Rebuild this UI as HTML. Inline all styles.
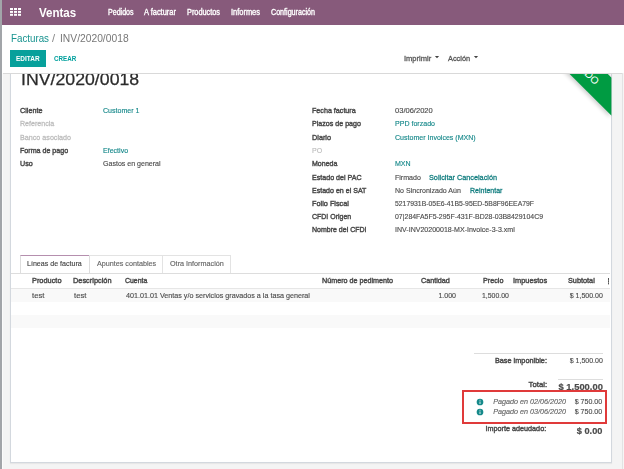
<!DOCTYPE html>
<html><head><meta charset="utf-8"><style>
html,body{margin:0;padding:0;}
body{width:624px;height:469px;position:relative;overflow:hidden;background:#f4f4f4;font-family:"Liberation Sans",sans-serif;}
.t{position:absolute;white-space:nowrap;}
.a{position:absolute;}
</style></head><body>
<!-- sheet -->
<div class="a" style="left:10px;top:40px;width:602px;height:423px;background:#fff;border:1px solid #d3d8de;border-top:0;box-sizing:border-box;box-shadow:0 1px 1px rgba(0,0,0,.05);"></div>
<!-- table stripes -->
<div class="a" style="left:11px;top:288.5px;width:599px;height:13.2px;background:#f9f9f9;"></div>
<div class="a" style="left:11px;top:315px;width:599px;height:13.2px;background:#f9f9f9;"></div>
<div class="a" style="left:11px;top:288px;width:599px;height:1px;background:#e6e6e6;"></div>
<!-- tabs -->
<div class="a" style="left:11px;top:272.5px;width:599px;height:1px;background:#ddd;"></div>
<div class="a" style="left:20.3px;top:255.3px;width:69.8px;height:18px;background:#fff;border:1px solid #ddd;border-top:1px solid #b58fae;border-bottom:0;box-sizing:border-box;"></div>
<div class="a" style="left:89.4px;top:255.3px;width:74px;height:17.5px;border:1px solid #e3e3e3;border-bottom:0;border-left:0;box-sizing:border-box;"></div>
<div class="a" style="left:163.3px;top:255.3px;width:67.3px;height:17.5px;border:1px solid #e3e3e3;border-bottom:0;border-left:0;box-sizing:border-box;"></div>
<!-- totals lines -->
<div class="a" style="left:474.3px;top:352.7px;width:128.5px;height:1px;background:#ddd;"></div>
<div class="a" style="left:558px;top:379px;width:44.8px;height:1px;background:#ddd;"></div>
<!-- kebab -->
<div class="a" style="left:607.6px;top:278px;width:1.3px;height:1.5px;background:#555;box-shadow:0 2.2px 0 #555,0 4.4px 0 #555;"></div>
<div class="t" style="left:20.60px;transform-origin:0 0;top:71px;font-size:16.5px;line-height:16.5px;font-weight:normal;font-style:normal;color:#2b2b2b;transform:scaleX(1.0737);-webkit-text-stroke:0.25px #2b2b2b;">INV/2020/0018</div>
<div class="t" style="left:19.80px;transform-origin:0 0;top:107px;font-size:8.0px;line-height:8.0px;font-weight:normal;font-style:normal;color:#4a4a4a;transform:scaleX(0.9035);-webkit-text-stroke:0.45px #4a4a4a;">Cliente</div>
<div class="t" style="left:19.80px;transform-origin:0 0;top:120px;font-size:8.0px;line-height:8.0px;font-weight:normal;font-style:normal;color:#bdbdbd;transform:scaleX(0.8866);-webkit-text-stroke:0.3px #bdbdbd;">Referencia</div>
<div class="t" style="left:19.80px;transform-origin:0 0;top:134px;font-size:8.0px;line-height:8.0px;font-weight:normal;font-style:normal;color:#bdbdbd;transform:scaleX(0.8958);-webkit-text-stroke:0.3px #bdbdbd;">Banco asociado</div>
<div class="t" style="left:19.80px;transform-origin:0 0;top:147px;font-size:8.0px;line-height:8.0px;font-weight:normal;font-style:normal;color:#4a4a4a;transform:scaleX(0.8878);-webkit-text-stroke:0.45px #4a4a4a;">Forma de pago</div>
<div class="t" style="left:19.80px;transform-origin:0 0;top:160px;font-size:8.0px;line-height:8.0px;font-weight:normal;font-style:normal;color:#4a4a4a;transform:scaleX(0.8924);-webkit-text-stroke:0.45px #4a4a4a;">Uso</div>
<div class="t" style="left:103.00px;transform-origin:0 0;top:107px;font-size:8.0px;line-height:8.0px;font-weight:normal;font-style:normal;color:#16888a;transform:scaleX(0.8803);-webkit-text-stroke:0.15px #16888a;">Customer 1</div>
<div class="t" style="left:103.00px;transform-origin:0 0;top:147px;font-size:8.0px;line-height:8.0px;font-weight:normal;font-style:normal;color:#16888a;transform:scaleX(0.8812);-webkit-text-stroke:0.15px #16888a;">Efectivo</div>
<div class="t" style="left:103.00px;transform-origin:0 0;top:160px;font-size:8.0px;line-height:8.0px;font-weight:normal;font-style:normal;color:#4c4c4c;transform:scaleX(0.8812);-webkit-text-stroke:0.15px #4c4c4c;">Gastos en general</div>
<div class="t" style="left:311.50px;transform-origin:0 0;top:107px;font-size:8.0px;line-height:8.0px;font-weight:normal;font-style:normal;color:#4a4a4a;transform:scaleX(0.8933);-webkit-text-stroke:0.45px #4a4a4a;">Fecha factura</div>
<div class="t" style="left:311.50px;transform-origin:0 0;top:120px;font-size:8.0px;line-height:8.0px;font-weight:normal;font-style:normal;color:#4a4a4a;transform:scaleX(0.8869);-webkit-text-stroke:0.45px #4a4a4a;">Plazos de pago</div>
<div class="t" style="left:311.50px;transform-origin:0 0;top:134px;font-size:8.0px;line-height:8.0px;font-weight:normal;font-style:normal;color:#4a4a4a;transform:scaleX(0.9114);-webkit-text-stroke:0.45px #4a4a4a;">Diario</div>
<div class="t" style="left:311.50px;transform-origin:0 0;top:147px;font-size:8.0px;line-height:8.0px;font-weight:normal;font-style:normal;color:#bdbdbd;transform:scaleX(0.8812);-webkit-text-stroke:0.15px #bdbdbd;">PO</div>
<div class="t" style="left:311.50px;transform-origin:0 0;top:160px;font-size:8.0px;line-height:8.0px;font-weight:normal;font-style:normal;color:#4a4a4a;transform:scaleX(0.8781);-webkit-text-stroke:0.45px #4a4a4a;">Moneda</div>
<div class="t" style="left:311.50px;transform-origin:0 0;top:174px;font-size:8.0px;line-height:8.0px;font-weight:normal;font-style:normal;color:#4a4a4a;transform:scaleX(0.8864);-webkit-text-stroke:0.45px #4a4a4a;">Estado del PAC</div>
<div class="t" style="left:311.50px;transform-origin:0 0;top:187px;font-size:8.0px;line-height:8.0px;font-weight:normal;font-style:normal;color:#4a4a4a;transform:scaleX(0.8821);-webkit-text-stroke:0.45px #4a4a4a;">Estado en el SAT</div>
<div class="t" style="left:311.50px;transform-origin:0 0;top:200px;font-size:8.0px;line-height:8.0px;font-weight:normal;font-style:normal;color:#4a4a4a;transform:scaleX(0.9138);-webkit-text-stroke:0.45px #4a4a4a;">Folio Fiscal</div>
<div class="t" style="left:311.50px;transform-origin:0 0;top:213px;font-size:8.0px;line-height:8.0px;font-weight:normal;font-style:normal;color:#4a4a4a;transform:scaleX(0.8731);-webkit-text-stroke:0.45px #4a4a4a;">CFDI Origen</div>
<div class="t" style="left:311.50px;transform-origin:0 0;top:226px;font-size:8.0px;line-height:8.0px;font-weight:normal;font-style:normal;color:#4a4a4a;transform:scaleX(0.8758);-webkit-text-stroke:0.45px #4a4a4a;">Nombre del CFDI</div>
<div class="t" style="left:394.70px;transform-origin:0 0;top:107px;font-size:8.0px;line-height:8.0px;font-weight:normal;font-style:normal;color:#4c4c4c;transform:scaleX(0.9416);-webkit-text-stroke:0.15px #4c4c4c;">03/06/2020</div>
<div class="t" style="left:394.70px;transform-origin:0 0;top:120px;font-size:8.0px;line-height:8.0px;font-weight:normal;font-style:normal;color:#16888a;transform:scaleX(0.8812);-webkit-text-stroke:0.15px #16888a;">PPD forzado</div>
<div class="t" style="left:394.70px;transform-origin:0 0;top:134px;font-size:8.0px;line-height:8.0px;font-weight:normal;font-style:normal;color:#16888a;transform:scaleX(0.8812);-webkit-text-stroke:0.15px #16888a;">Customer Invoices (MXN)</div>
<div class="t" style="left:394.70px;transform-origin:0 0;top:160px;font-size:8.0px;line-height:8.0px;font-weight:normal;font-style:normal;color:#16888a;transform:scaleX(0.8812);-webkit-text-stroke:0.15px #16888a;">MXN</div>
<div class="t" style="left:394.70px;transform-origin:0 0;top:174px;font-size:8.0px;line-height:8.0px;font-weight:normal;font-style:normal;color:#4c4c4c;transform:scaleX(0.8812);-webkit-text-stroke:0.15px #4c4c4c;">Firmado</div>
<div class="t" style="left:429.00px;transform-origin:0 0;top:174px;font-size:8.0px;line-height:8.0px;font-weight:normal;font-style:normal;color:#147f80;transform:scaleX(0.9103);-webkit-text-stroke:0.3px #147f80;">Solicitar Cancelación</div>
<div class="t" style="left:394.70px;transform-origin:0 0;top:187px;font-size:8.0px;line-height:8.0px;font-weight:normal;font-style:normal;color:#4c4c4c;transform:scaleX(0.8812);-webkit-text-stroke:0.15px #4c4c4c;">No Sincronizado Aún</div>
<div class="t" style="left:469.60px;transform-origin:0 0;top:187px;font-size:8.0px;line-height:8.0px;font-weight:normal;font-style:normal;color:#147f80;transform:scaleX(0.8778);-webkit-text-stroke:0.3px #147f80;">Reintentar</div>
<div class="t" style="left:394.70px;transform-origin:0 0;top:200px;font-size:8.0px;line-height:8.0px;font-weight:normal;font-style:normal;color:#4c4c4c;transform:scaleX(0.8563);-webkit-text-stroke:0.15px #4c4c4c;">5217931B-05E6-41B5-95ED-5B8F96EEA79F</div>
<div class="t" style="left:394.70px;transform-origin:0 0;top:213px;font-size:8.0px;line-height:8.0px;font-weight:normal;font-style:normal;color:#4c4c4c;transform:scaleX(0.8674);-webkit-text-stroke:0.15px #4c4c4c;">07|284FA5F5-295F-431F-BD28-03B8429104C9</div>
<div class="t" style="left:394.70px;transform-origin:0 0;top:226px;font-size:8.0px;line-height:8.0px;font-weight:normal;font-style:normal;color:#4c4c4c;transform:scaleX(0.8798);-webkit-text-stroke:0.15px #4c4c4c;">INV-INV20200018-MX-Invoice-3-3.xml</div>
<div class="t" style="left:27.30px;transform-origin:0 0;top:260px;font-size:8.0px;line-height:8.0px;font-weight:normal;font-style:normal;color:#444;transform:scaleX(0.8848);-webkit-text-stroke:0.15px #444;">Líneas de factura</div>
<div class="t" style="left:96.50px;transform-origin:0 0;top:260px;font-size:8.0px;line-height:8.0px;font-weight:normal;font-style:normal;color:#666;transform:scaleX(0.8978);-webkit-text-stroke:0.15px #666;">Apuntes contables</div>
<div class="t" style="left:170.00px;transform-origin:0 0;top:260px;font-size:8.0px;line-height:8.0px;font-weight:normal;font-style:normal;color:#666;transform:scaleX(0.9030);-webkit-text-stroke:0.15px #666;">Otra Información</div>
<div class="t" style="left:31.50px;transform-origin:0 0;top:277px;font-size:8.0px;line-height:8.0px;font-weight:normal;font-style:normal;color:#4a4a4a;transform:scaleX(0.9213);-webkit-text-stroke:0.45px #4a4a4a;">Producto</div>
<div class="t" style="left:73.30px;transform-origin:0 0;top:277px;font-size:8.0px;line-height:8.0px;font-weight:normal;font-style:normal;color:#4a4a4a;transform:scaleX(0.9212);-webkit-text-stroke:0.45px #4a4a4a;">Descripción</div>
<div class="t" style="left:125.10px;transform-origin:0 0;top:277px;font-size:8.0px;line-height:8.0px;font-weight:normal;font-style:normal;color:#4a4a4a;transform:scaleX(0.8644);-webkit-text-stroke:0.45px #4a4a4a;">Cuenta</div>
<div class="t" style="left:321.80px;transform-origin:0 0;top:277px;font-size:8.0px;line-height:8.0px;font-weight:normal;font-style:normal;color:#4a4a4a;transform:scaleX(0.8970);-webkit-text-stroke:0.45px #4a4a4a;">Número de pedimento</div>
<div class="t" style="left:421.30px;transform-origin:0 0;top:277px;font-size:8.0px;line-height:8.0px;font-weight:normal;font-style:normal;color:#4a4a4a;transform:scaleX(0.8962);-webkit-text-stroke:0.45px #4a4a4a;">Cantidad</div>
<div class="t" style="left:482.60px;transform-origin:0 0;top:277px;font-size:8.0px;line-height:8.0px;font-weight:normal;font-style:normal;color:#4a4a4a;transform:scaleX(0.8996);-webkit-text-stroke:0.45px #4a4a4a;">Precio</div>
<div class="t" style="left:512.60px;transform-origin:0 0;top:277px;font-size:8.0px;line-height:8.0px;font-weight:normal;font-style:normal;color:#4a4a4a;transform:scaleX(0.9240);-webkit-text-stroke:0.45px #4a4a4a;">Impuestos</div>
<div class="t" style="left:568.20px;transform-origin:0 0;top:277px;font-size:8.0px;line-height:8.0px;font-weight:normal;font-style:normal;color:#4a4a4a;transform:scaleX(0.9129);-webkit-text-stroke:0.45px #4a4a4a;">Subtotal</div>
<div class="t" style="left:32.00px;transform-origin:0 0;top:292px;font-size:8.0px;line-height:8.0px;font-weight:normal;font-style:normal;color:#4c4c4c;transform:scaleX(0.9617);-webkit-text-stroke:0.15px #4c4c4c;">test</div>
<div class="t" style="left:74.40px;transform-origin:0 0;top:292px;font-size:8.0px;line-height:8.0px;font-weight:normal;font-style:normal;color:#4c4c4c;transform:scaleX(0.9617);-webkit-text-stroke:0.15px #4c4c4c;">test</div>
<div class="t" style="left:125.60px;transform-origin:0 0;top:292px;font-size:8.0px;line-height:8.0px;font-weight:normal;font-style:normal;color:#4c4c4c;transform:scaleX(0.8970);-webkit-text-stroke:0.15px #4c4c4c;">401.01.01 Ventas y/o servicios gravados a la tasa general</div>
<div class="t" style="right:168.40px;transform-origin:100% 0;top:292px;font-size:8.0px;line-height:8.0px;font-weight:normal;font-style:normal;color:#4c4c4c;transform:scaleX(0.8812);-webkit-text-stroke:0.15px #4c4c4c;">1.000</div>
<div class="t" style="left:481.80px;transform-origin:0 0;top:292px;font-size:8.0px;line-height:8.0px;font-weight:normal;font-style:normal;color:#4c4c4c;transform:scaleX(0.8638);-webkit-text-stroke:0.15px #4c4c4c;">1,500.00</div>
<div class="t" style="right:21.20px;transform-origin:100% 0;top:292px;font-size:8.0px;line-height:8.0px;font-weight:normal;font-style:normal;color:#4c4c4c;transform:scaleX(0.8754);-webkit-text-stroke:0.15px #4c4c4c;">$ 1,500.00</div>
<div class="t" style="right:77.00px;transform-origin:100% 0;top:357px;font-size:8.0px;line-height:8.0px;font-weight:normal;font-style:normal;color:#4a4a4a;transform:scaleX(0.9135);-webkit-text-stroke:0.45px #4a4a4a;">Base imponible:</div>
<div class="t" style="right:21.50px;transform-origin:100% 0;top:357px;font-size:8.0px;line-height:8.0px;font-weight:normal;font-style:normal;color:#4c4c4c;transform:scaleX(0.8754);-webkit-text-stroke:0.15px #4c4c4c;">$ 1,500.00</div>
<div class="t" style="right:77.00px;transform-origin:100% 0;top:381px;font-size:8.0px;line-height:8.0px;font-weight:normal;font-style:normal;color:#4a4a4a;transform:scaleX(0.9675);-webkit-text-stroke:0.45px #4a4a4a;">Total:</div>
<div class="t" style="right:21.60px;transform-origin:100% 0;top:382px;font-size:9.5px;line-height:9.5px;font-weight:bold;font-style:normal;color:#4c4c4c;transform:scaleX(0.9888);-webkit-text-stroke:0.2px #4c4c4c;">$ 1,500.00</div>
<div class="t" style="right:58.20px;transform-origin:100% 0;top:398px;font-size:8.0px;line-height:8.0px;font-weight:normal;font-style:italic;color:#666;transform:scaleX(0.8992);-webkit-text-stroke:0.15px #666;">Pagado en 02/06/2020</div>
<div class="t" style="right:21.80px;transform-origin:100% 0;top:398px;font-size:8.0px;line-height:8.0px;font-weight:normal;font-style:normal;color:#4c4c4c;transform:scaleX(0.8831);-webkit-text-stroke:0.15px #4c4c4c;">$ 750.00</div>
<div class="t" style="right:58.20px;transform-origin:100% 0;top:408px;font-size:8.0px;line-height:8.0px;font-weight:normal;font-style:italic;color:#666;transform:scaleX(0.8992);-webkit-text-stroke:0.15px #666;">Pagado en 03/06/2020</div>
<div class="t" style="right:21.80px;transform-origin:100% 0;top:408px;font-size:8.0px;line-height:8.0px;font-weight:normal;font-style:normal;color:#4c4c4c;transform:scaleX(0.8831);-webkit-text-stroke:0.15px #4c4c4c;">$ 750.00</div>
<div class="t" style="right:77.50px;transform-origin:100% 0;top:425px;font-size:8.0px;line-height:8.0px;font-weight:normal;font-style:normal;color:#4a4a4a;transform:scaleX(0.9038);-webkit-text-stroke:0.45px #4a4a4a;">Importe adeudado:</div>
<div class="t" style="right:21.60px;transform-origin:100% 0;top:426px;font-size:9.5px;line-height:9.5px;font-weight:bold;font-style:normal;color:#4c4c4c;transform:scaleX(0.9730);-webkit-text-stroke:0.2px #4c4c4c;">$ 0.00</div>
<!-- red box -->
<div class="a" style="left:462.2px;top:390.3px;width:145px;height:34px;border:2px solid #e03a3a;box-sizing:border-box;"></div>
<!-- info icons -->
<svg class="a" style="left:475.5px;top:397.7px" width="8" height="8" viewBox="0 0 8 8"><circle cx="4" cy="4" r="3.35" fill="#15898a"/><rect x="3.55" y="3.5" width="0.9" height="2.5" fill="#fff" opacity="0.9"/><rect x="3.55" y="1.8" width="0.9" height="0.9" fill="#fff" opacity="0.9"/></svg>
<svg class="a" style="left:475.5px;top:407.7px" width="8" height="8" viewBox="0 0 8 8"><circle cx="4" cy="4" r="3.35" fill="#15898a"/><rect x="3.55" y="3.5" width="0.9" height="2.5" fill="#fff" opacity="0.9"/><rect x="3.55" y="1.8" width="0.9" height="0.9" fill="#fff" opacity="0.9"/></svg>
<!-- ribbon -->
<svg class="a" style="left:0;top:0" width="624" height="469" viewBox="0 0 624 469">
<defs><filter id="sh" x="-50%" y="-50%" width="200%" height="200%"><feGaussianBlur stdDeviation="2.2"/></filter>
<clipPath id="cp"><rect x="10" y="73" width="601.6" height="390"/></clipPath></defs>
<g clip-path="url(#cp)">
<polygon points="560,64.4 602.2,64.4 611.6,73.8 611.6,115.8" fill="#000" opacity="0.2" filter="url(#sh)" transform="translate(-1.5,1.5)"/>
<polygon points="560,64.4 598.2,64.4 611.6,77.8 611.6,115.8" fill="#009b42"/>
<text x="0" y="0" transform="translate(594.8,85.3) rotate(45)" text-anchor="end" font-family="Liberation Sans" font-size="10.2" font-weight="normal" fill="#fff">PAGADO</text>
</g>
</svg>
<!-- control panel -->
<div class="a" style="left:0;top:24.5px;width:624px;height:49px;background:#fff;border-bottom:1px solid #d9d9d9;box-sizing:border-box;"></div>
<div class="a" style="left:10.3px;top:50px;width:35.4px;height:16.8px;background:#07a09b;"></div>
<!-- carets -->
<svg class="a" style="left:434px;top:55px" width="6" height="4" viewBox="0 0 6 4"><polygon points="0.9,1 5.1,1 3,3.3" fill="#444"/></svg>
<svg class="a" style="left:472.5px;top:55px" width="6" height="4" viewBox="0 0 6 4"><polygon points="0.9,1 5.1,1 3,3.3" fill="#444"/></svg>
<!-- navbar -->
<div class="a" style="left:0;top:0;width:624px;height:24.8px;background:#875A7B;"></div>
<!-- grid icon -->
<div class="a" style="left:9.8px;top:8px;width:3.5px;height:2.3px;background:#fff;box-shadow:4px 0 0 #fff,8px 0 0 #fff,0 2.9px 0 #fff,4px 2.9px 0 #fff,8px 2.9px 0 #fff,0 5.8px 0 #fff,4px 5.8px 0 #fff,8px 5.8px 0 #fff;"></div>
<div class="t" style="left:38.60px;transform-origin:0 0;top:7px;font-size:12.6px;line-height:12.6px;font-weight:bold;font-style:normal;color:#fff;transform:scaleX(0.9157);">Ventas</div>
<div class="t" style="left:108.10px;transform-origin:0 0;top:8px;font-size:8.3px;line-height:8.3px;font-weight:normal;font-style:normal;color:#fff;transform:scaleX(0.8535);-webkit-text-stroke:0.35px #fff;">Pedidos</div>
<div class="t" style="left:144.00px;transform-origin:0 0;top:8px;font-size:8.3px;line-height:8.3px;font-weight:normal;font-style:normal;color:#fff;transform:scaleX(0.9008);-webkit-text-stroke:0.35px #fff;">A facturar</div>
<div class="t" style="left:187.00px;transform-origin:0 0;top:8px;font-size:8.3px;line-height:8.3px;font-weight:normal;font-style:normal;color:#fff;transform:scaleX(0.8830);-webkit-text-stroke:0.35px #fff;">Productos</div>
<div class="t" style="left:231.00px;transform-origin:0 0;top:8px;font-size:8.3px;line-height:8.3px;font-weight:normal;font-style:normal;color:#fff;transform:scaleX(0.8982);-webkit-text-stroke:0.35px #fff;">Informes</div>
<div class="t" style="left:271.00px;transform-origin:0 0;top:8px;font-size:8.3px;line-height:8.3px;font-weight:normal;font-style:normal;color:#fff;transform:scaleX(0.8591);-webkit-text-stroke:0.35px #fff;">Configuración</div>
<div class="t" style="left:10.60px;transform-origin:0 0;top:33px;font-size:11.0px;line-height:11.0px;font-weight:normal;font-style:normal;color:#17938f;transform:scaleX(0.8880);">Facturas</div>
<div class="t" style="left:51.90px;transform-origin:0 0;top:33px;font-size:11.0px;line-height:11.0px;font-weight:normal;font-style:normal;color:#888;transform:scaleX(1.0144);">/</div>
<div class="t" style="left:59.60px;transform-origin:0 0;top:33px;font-size:11.0px;line-height:11.0px;font-weight:normal;font-style:normal;color:#777;transform:scaleX(0.9347);">INV/2020/0018</div>
<div class="t" style="left:16.30px;transform-origin:0 0;top:55px;font-size:7.8px;line-height:7.8px;font-weight:bold;font-style:normal;color:#fff;transform:scaleX(0.8294);">EDITAR</div>
<div class="t" style="left:53.70px;transform-origin:0 0;top:55px;font-size:7.8px;line-height:7.8px;font-weight:bold;font-style:normal;color:#00A09D;transform:scaleX(0.8005);">CREAR</div>
<div class="t" style="left:404.10px;transform-origin:0 0;top:55px;font-size:8.0px;line-height:8.0px;font-weight:normal;font-style:normal;color:#555;transform:scaleX(0.9417);-webkit-text-stroke:0.3px #555;">Imprimir</div>
<div class="t" style="left:447.70px;transform-origin:0 0;top:55px;font-size:8.0px;line-height:8.0px;font-weight:normal;font-style:normal;color:#555;transform:scaleX(0.9204);-webkit-text-stroke:0.3px #555;">Acción</div>
<div class="a" style="left:0;top:0;width:1.8px;height:469px;background:#a2a5a9;"></div><div class="a" style="left:1.8px;top:73px;width:1.2px;height:396px;background:#fbfbfb;"></div>
<div class="a" style="left:621.5px;top:73px;width:1px;height:396px;background:#e3e3e3;"></div><div class="a" style="left:622.5px;top:73px;width:1.5px;height:396px;background:#f6f6f6;"></div>
</body></html>
